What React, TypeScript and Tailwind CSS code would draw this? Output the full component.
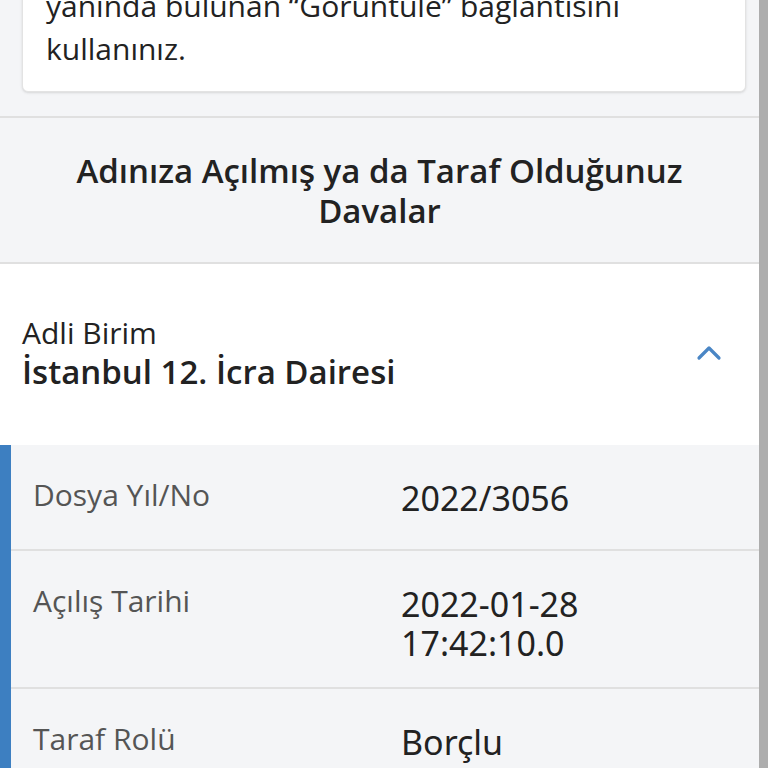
import React from 'react'

const sans = { fontFamily: '"Open Sans", Lato, sans-serif' }
const num = { fontFamily: '"Noto Sans", Roboto, sans-serif' }

interface RowProps {
  label: string
  lines: string[]
  pb: string
  last?: boolean
}

function InfoRow({ label, lines, pb, last }: RowProps) {
  return (
    <div className={`flex pt-[34px] ${pb} ${last ? '' : 'border-b-2 border-[#e0e0e0]'}`}>
      <div className="w-[390px] shrink-0 pl-[22px] text-[30px] leading-[32px] text-[#555555]" style={sans}>
        {label}
      </div>
      <div className="text-[34px] leading-[39px] text-[#222222]" style={num}>
        {lines.map((l) => (
          <div key={l}>{l}</div>
        ))}
      </div>
    </div>
  )
}

export default function App() {
  return (
    <div className="flex w-[768px] h-[768px] overflow-hidden bg-[#f4f5f7]">
      <div className="flex-1 min-w-0 flex flex-col">
        <div className="shrink-0 pb-[24px]">
          <div
            className="-mt-[40px] ml-[22px] mr-[13px] rounded-b-md border border-[#e3e3e3] bg-white shadow-sm px-[23px] pb-[21px] pt-[23px] text-[30px] leading-[43px] text-[#222222]"
            style={sans}
          >
            <div>yanında bulunan “Görüntüle” bağlantısını</div>
            <div>kullanınız.</div>
          </div>
        </div>

        <div className="shrink-0 border-y-2 border-[#e0e0e0] pt-[33px] pb-[31px] text-center">
          <h2 className="text-[33px] leading-[40px] font-semibold text-[#222222]" style={sans}>
            Adınıza Açılmış ya da Taraf Olduğunuz
            <br />
            Davalar
          </h2>
        </div>

        <div className="shrink-0 flex items-center justify-between bg-white h-[181px] pl-[22px] pr-[37px]">
          <div style={sans} className="pb-[4px]">
            <div className="text-[30px] leading-[38px] font-medium text-[#222222]">Adli Birim</div>
            <div className="text-[33px] leading-[40px] font-semibold text-[#222222]">İstanbul 12. İcra Dairesi</div>
          </div>
          <svg width="26" height="16" viewBox="0 0 26 16" fill="none" className="mt-[-4px]">
            <path d="M3 13 L13 3 L23 13" stroke="#4a86c5" strokeWidth="3.2" strokeLinecap="round" strokeLinejoin="round" />
          </svg>
        </div>

        <div className="flex flex-1 bg-[#f4f5f7]">
          <div className="w-[11px] shrink-0 bg-[#3d7fc1]" />
          <div className="flex-1">
            <InfoRow label="Dosya Yıl/No" lines={['2022/3056']} pb="pb-[31px]" />
            <InfoRow label="Açılış Tarihi" lines={['2022-01-28', '17:42:10.0']} pb="pb-[24px]" />
            <InfoRow label="Taraf Rolü" lines={['Borçlu']} pb="pb-[31px]" last />
          </div>
        </div>
      </div>
      <div className="w-[9px] shrink-0 bg-[#adadad]" />
    </div>
  )
}
